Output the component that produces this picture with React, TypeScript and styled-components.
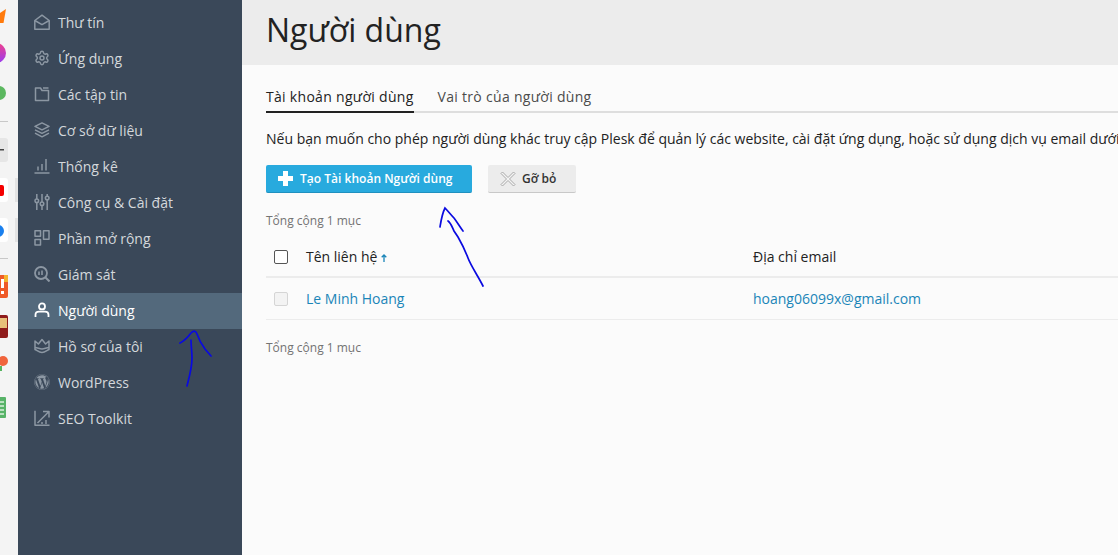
import React from 'react';
import styled, { createGlobalStyle } from 'styled-components';
import { FaWordpress } from 'react-icons/fa';
import { Settings } from 'lucide-react';

const GlobalStyle = createGlobalStyle`
  html, body {
    margin: 0;
    padding: 0;
    background: #fbfbfb;
    font-family: 'Open Sans', 'Noto Sans', sans-serif;
  }
  * {
    box-sizing: border-box;
  }
`;

const Page = styled.div`
  position: relative;
  display: flex;
  width: 1118px;
  height: 555px;
  overflow: hidden;
`;

const BrowserStrip = styled.svg`
  flex: 0 0 18px;
  width: 18px;
  height: 555px;
`;

const Sidebar = styled.nav`
  flex: 0 0 224px;
  display: flex;
  flex-direction: column;
  padding-top: 5px;
  background: #3a4859;
`;

const NavItem = styled.a<{ $active?: boolean }>`
  display: flex;
  align-items: center;
  gap: 8px;
  height: 36px;
  padding-left: 16px;
  padding-bottom: 2px;
  font-size: 14px;
  color: ${({ $active }) => ($active ? '#ffffff' : '#d4d8dc')};
  background: ${({ $active }) => ($active ? '#53697c' : 'transparent')};

  svg {
    flex: 0 0 16px;
    width: 16px;
    height: 16px;
    color: ${({ $active }) => ($active ? '#ffffff' : '#8c97a3')};
  }
`;

const CollapseColumn = styled.div`
  flex: 0 0 24px;
  padding-top: 343px;
  background: #fbfbfb;
`;

const CollapseHandle = styled.div`
  display: flex;
  align-items: center;
  justify-content: center;
  width: 16px;
  height: 88px;
  background: #e9e9e9;
  border-radius: 0 3px 3px 0;

  svg {
    width: 8px;
    height: 10px;
  }
`;

const Main = styled.main`
  flex: 1;
  min-width: 0;
  margin-left: -24px;
  background: #fbfbfb;
`;

const Header = styled.header`
  height: 65px;
  padding: 8px 0 0 24px;
  background: #ececec;
`;

const Title = styled.h1`
  margin: 0;
  font-size: 32px;
  font-weight: 400;
  line-height: 44px;
  color: #222222;
`;

const Content = styled.div`
  padding: 20px 0 0 24px;
`;

const Tabs = styled.div`
  display: flex;
  gap: 24px;
  height: 28px;
  border-bottom: 2px solid #dedede;
`;

const Tab = styled.div<{ $active?: boolean }>`
  height: 28px;
  font-size: 14px;
  line-height: 24px;
  letter-spacing: 0.3px;
  color: ${({ $active }) => ($active ? '#222222' : '#4b4b4b')};
  border-bottom: 2px solid ${({ $active }) => ($active ? '#222222' : 'transparent')};
`;

const Description = styled.p`
  margin: 14px 0 0;
  font-size: 14px;
  line-height: 24px;
  color: #222222;
  white-space: nowrap;
`;

const Toolbar = styled.div`
  display: flex;
  gap: 16px;
  margin-top: 14px;
`;

const Button = styled.div<{ $primary?: boolean }>`
  display: flex;
  align-items: center;
  height: 28px;
  font-size: 12px;
  font-weight: 600;
  letter-spacing: 0.02px;
  border-radius: 2px;
  color: ${({ $primary }) => ($primary ? '#ffffff' : '#333333')};
  background: ${({ $primary }) => ($primary ? '#28aade' : '#ececec')};
  border-bottom: 1px solid ${({ $primary }) => ($primary ? '#1f90bf' : '#c8c8c8')};
`;

const CreateButton = styled(Button)`
  gap: 7px;
  width: 206px;
  padding-left: 12px;

  svg {
    width: 15px;
    height: 15px;
  }
`;

const RemoveButton = styled(Button)`
  gap: 6px;
  width: 88px;
  padding-left: 12px;

  svg {
    width: 16px;
    height: 16px;
  }
`;

const Total = styled.div`
  font-size: 12px;
  line-height: 16px;
  color: #737373;
`;

const TopTotal = styled(Total)`
  margin-top: 20px;
`;

const BottomTotal = styled(Total)`
  margin-top: 20px;
`;

const Row = styled.div`
  display: grid;
  grid-template-columns: 40px 447px 1fr;
  align-items: center;
  font-size: 14px;
`;

const HeadRow = styled(Row)`
  height: 41px;
  margin-top: 8px;
  color: #222222;
  border-bottom: 2px solid #ececec;
`;

const BodyRow = styled(Row)`
  height: 42px;
  color: #1a85b8;
  border-bottom: 1px solid #ececec;
`;

const CheckCell = styled.div`
  padding-left: 8px;
`;

const Check = styled.div<{ $disabled?: boolean }>`
  width: 14px;
  height: 14px;
  border-radius: 2px;
  background: ${({ $disabled }) => ($disabled ? '#f3f3f3' : '#ffffff')};
  border: 1px solid ${({ $disabled }) => ($disabled ? '#d5d5d5' : '#555555')};
`;

const NameHeading = styled.div`
  display: flex;
  align-items: center;
  gap: 4px;

  svg {
    width: 6px;
    height: 8px;
    margin-top: 2px;
  }
`;

const Scribbles = styled.svg`
  position: absolute;
  inset: 0;
  width: 1118px;
  height: 555px;
  pointer-events: none;
`;

const strokeProps = {
  fill: 'none',
  stroke: 'currentColor',
  strokeWidth: 1.5,
  strokeLinejoin: 'round' as const,
};

const MailIcon = () => (
  <svg viewBox="0 0 16 16" {...strokeProps}>
    <path d="M.8 6.5 8 1.2l7.2 5.3v8.7H.8z" />
    <path d="M.8 6.5 8 10.6l7.2-4.1" />
  </svg>
);

const FolderIcon = () => (
  <svg viewBox="0 0 16 16" {...strokeProps}>
    <path d="M1.500 2h5l1.500 2.500h6.500V14.500h-13z" />
    <path d="M9 2h5.500" />
  </svg>
);

const LayersIcon = () => (
  <svg viewBox="0 0 16 16" {...strokeProps}>
    <path d="M8 .9 15 4.400 8 7.900 1 4.400z" />
    <path d="M1 7.800l7 3.500 7-3.500" />
    <path d="M1 11.200l7 3.600 7-3.600" />
  </svg>
);

const ChartIcon = () => (
  <svg viewBox="0 0 16 16" {...strokeProps}>
    <path d="M.5 15h15M4 12.500V8.500M8 12.500V6M12 12.500V1" />
  </svg>
);

const SlidersIcon = () => (
  <svg viewBox="0 0 16 16" {...strokeProps}>
    <path d="M2.800 0v5M2.800 8.500V16M8 0v8M8 11.500V16M13.200 0v2M13.200 6V16" />
    <circle cx="2.800" cy="6.800" r="1.800" />
    <circle cx="8" cy="9.800" r="1.800" />
    <circle cx="13.200" cy="4" r="1.800" />
  </svg>
);

const ExtensionsIcon = () => (
  <svg viewBox="0 0 16 16" {...strokeProps}>
    <rect x="1" y=".8" width="5.500" height="5.500" />
    <rect x="1" y="9.500" width="5.500" height="5.500" />
    <rect x="9.500" y=".8" width="5.500" height="8.500" />
  </svg>
);

const MonitorIcon = () => (
  <svg viewBox="0 0 16 16" {...strokeProps}>
    <circle cx="7" cy="7" r="6" strokeWidth="1.800" />
    <path d="m11.500 11.500 4 4" strokeWidth="2" />
    <path d="M5 5.500v3.500M8 4.500v4.500" strokeWidth="1.600" />
  </svg>
);

const UserIcon = () => (
  <svg viewBox="0 0 16 16" {...strokeProps} strokeWidth={1.8}>
    <circle cx="8" cy="4.400" r="3" />
    <path d="M1.500 15v-2.200C1.500 10.600 3 9.600 5 9.600h6c2 0 3.500 1 3.500 3.200V15" />
  </svg>
);

const CrownIcon = () => (
  <svg viewBox="0 0 16 16" {...strokeProps}>
    <path d="M1 3l3.400 3L8 1.500 11.600 6 15 3v8.500c-2 1-4.500 3-7 3s-5-2-7-3z" />
    <path d="M1 9.500c2.500 0 4.500 1.500 7 1.500s4.500-1.500 7-1.500" />
  </svg>
);

const SeoIcon = () => (
  <svg viewBox="0 0 16 16" {...strokeProps}>
    <path d="M1 .8V15.200H15.500" />
    <path d="M3.500 13 14.500 2M9 1.500h6V7.500M8 12v2M12 10v4" />
  </svg>
);

const navItems = [
  { label: 'Thư tín', icon: <MailIcon /> },
  { label: 'Ứng dụng', icon: <Settings strokeWidth={2.2} /> },
  { label: 'Các tập tin', icon: <FolderIcon /> },
  { label: 'Cơ sở dữ liệu', icon: <LayersIcon /> },
  { label: 'Thống kê', icon: <ChartIcon /> },
  { label: 'Công cụ & Cài đặt', icon: <SlidersIcon /> },
  { label: 'Phần mở rộng', icon: <ExtensionsIcon /> },
  { label: 'Giám sát', icon: <MonitorIcon /> },
  { label: 'Người dùng', icon: <UserIcon />, active: true },
  { label: 'Hồ sơ của tôi', icon: <CrownIcon /> },
  { label: 'WordPress', icon: <FaWordpress /> },
  { label: 'SEO Toolkit', icon: <SeoIcon /> },
];

const App: React.FC = () => (
  <Page>
    <GlobalStyle />
    <BrowserStrip viewBox="0 0 18 555">
      <defs>
        <linearGradient id="messenger" x1="0" y1="0" x2="0" y2="1">
          <stop offset="0" stopColor="#f0408c" />
          <stop offset="1" stopColor="#9a3cf0" />
        </linearGradient>
      </defs>
      <rect width="18" height="555" fill="#f4f4f4" />
      <path d="M6 9 3.500 23H0V13z" fill="#ff7a0c" />
      <circle cx="-4" cy="53" r="10" fill="url(#messenger)" />
      <circle cx="-1" cy="93" r="7" fill="#5cb860" />
      <rect y="121" width="8" height="1" fill="#c8c8c8" />
      <rect x="-6" y="138" width="14" height="24" rx="3" fill="#e6e6e6" />
      <rect y="149" width="4" height="1.500" fill="#444" />
      <rect x="-6" y="178" width="14" height="24" rx="3" fill="#fff" />
      <rect x="-4" y="185" width="8" height="11" rx="2" fill="#f40000" />
      <rect x="15" y="178" width="3" height="24" fill="#e3e3e3" />
      <rect x="-6" y="218" width="14" height="24" rx="3" fill="#fff" />
      <circle cx="-2" cy="231" r="6" fill="#1a80ee" />
      <rect x="15" y="218" width="3" height="24" fill="#e3e3e3" />
      <rect y="258" width="8" height="1" fill="#c8c8c8" />
      <rect x="-4" y="275" width="12" height="23" rx="2" fill="#ef5a28" />
      <rect x="4" y="275" width="4" height="7" fill="#f5b32e" />
      <rect x="1" y="279" width="3" height="9" fill="#fff" />
      <rect x="1" y="291" width="3" height="3" fill="#fff" />
      <rect x="-4" y="315" width="12" height="23" rx="2" fill="#8e1b1b" />
      <rect y="318" width="7" height="10" fill="#e8c07a" />
      <circle cx="3" cy="361" r="5" fill="#f0643c" />
      <rect y="366" width="2" height="5" fill="#55b45f" />
      <rect x="-4" y="397" width="10" height="21" rx="1" fill="#58b368" />
      <path d="M0 402h4M0 406h4M0 410h4M0 414h4" stroke="#d9efdc" strokeWidth="1.500" />
    </BrowserStrip>
    <Sidebar>
      {navItems.map((item) => (
        <NavItem key={item.label} $active={item.active}>
          {item.icon}
          {item.label}
        </NavItem>
      ))}
    </Sidebar>
    <CollapseColumn>
      <CollapseHandle>
        <svg viewBox="0 0 8 10" fill="none" stroke="#333" strokeWidth="1.200">
          <path d="M5.500 1 2.500 5l3 4" />
        </svg>
      </CollapseHandle>
    </CollapseColumn>
    <Main>
      <Header>
        <Title>Người dùng</Title>
      </Header>
      <Content>
        <Tabs>
          <Tab $active>Tài khoản người dùng</Tab>
          <Tab>Vai trò của người dùng</Tab>
        </Tabs>
        <Description>
          Nếu bạn muốn cho phép người dùng khác truy cập Plesk để quản lý các website, cài đặt ứng dụng, hoặc sử dụng dịch vụ email dưới
        </Description>
        <Toolbar>
          <CreateButton $primary>
            <svg viewBox="0 0 15 15" fill="#fff">
              <path d="M5 0h5v5h5v5h-5v5H5v-5H0V5h5z" />
            </svg>
            Tạo Tài khoản Người dùng
          </CreateButton>
          <RemoveButton>
            <svg viewBox="0 0 16 16" fill="#f4f4f4" stroke="#a8a8a8" strokeWidth="1">
              <path d="M2.500 1 8 6.500 13.500 1 15 2.500 9.500 8l5.500 5.500-1.500 1.500L8 9.500 2.500 15 1 13.500 6.500 8 1 2.500z" />
            </svg>
            Gỡ bỏ
          </RemoveButton>
        </Toolbar>
        <TopTotal>Tổng cộng 1 mục</TopTotal>
        <HeadRow>
          <CheckCell>
            <Check />
          </CheckCell>
          <NameHeading>
            Tên liên hệ
            <svg viewBox="0 0 6 8" fill="none" stroke="#1a85b8" strokeWidth="1.300">
              <path d="M3 8V1M.7 3.300 3 1l2.300 2.300" />
            </svg>
          </NameHeading>
          <div>Địa chỉ email</div>
        </HeadRow>
        <BodyRow>
          <CheckCell>
            <Check $disabled />
          </CheckCell>
          <div>Le Minh Hoang</div>
          <div>hoang06099x@gmail.com</div>
        </BodyRow>
        <BottomTotal>Tổng cộng 1 mục</BottomTotal>
      </Content>
    </Main>
    <Scribbles viewBox="0 0 1118 555" fill="none" stroke="#0a0ae0" strokeWidth="1.700" strokeLinecap="round">
      <path d="M187 386c2-8 5-18 5-28 0-6-1-12-1-18" />
      <path d="M180 343c4-2 8-6 11-10 3-3 5-2 6 1 2 6 5 11 8 15l6 7" />
      <path d="M440 227c1-6 2-13 5-19 3 3 6 7 9 10 3 4 6 9 9 13" />
      <path d="M448 221c3 2 4 6 6 10l4 6c4 7 7 13 10 21 3 8 10 18 15 28" />
    </Scribbles>
  </Page>
);

export default App;
